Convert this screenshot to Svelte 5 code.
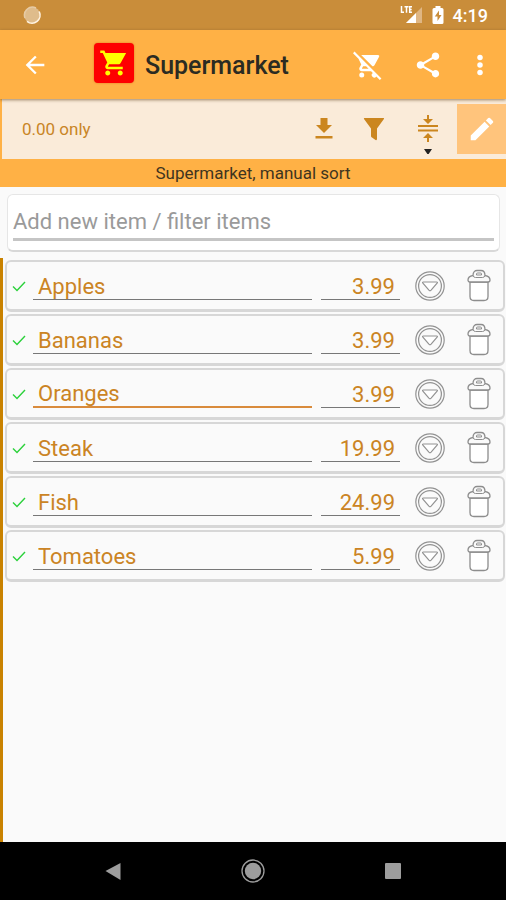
<script>
  let items = $state([
    { name: 'Apples', price: '3.99' },
    { name: 'Bananas', price: '3.99' },
    { name: 'Oranges', price: '3.99', active: true },
    { name: 'Steak', price: '19.99' },
    { name: 'Fish', price: '24.99' },
    { name: 'Tomatoes', price: '5.99' }
  ]);
  let query = $state('');
</script>

<div class="screen">
  <div class="status">
    <svg class="spinner" width="20" height="20" viewBox="0 0 20 20">
      <circle cx="10" cy="10" r="8" fill="#dfbc8b" />
      <path d="M17.2 6.5A8 8 0 0 1 5 16.3" fill="none" stroke="#fff3e2" stroke-width="1.600" />
      <path d="M3 13A8 8 0 0 1 14 3" fill="none" stroke="#e6cba5" stroke-width="1.500" />
    </svg>
    <svg width="24" height="20" viewBox="0 0 24 20">
      <path d="M22 2v16H6z" fill="#dfb683" />
      <path d="M16 8v10H6z" fill="#fff" />
      <path d="M0 0h13v9H0z" fill="#c98d3a" />
      <path d="M1.500 1v6.200h2.500M4.500 1.700h4M6.500 1.700v6M12 1.700H9.700v5.500H12M9.700 4.400h2" fill="none" stroke="#fff" stroke-width="1.500" />
    </svg>
    <svg class="battery" width="12" height="20" viewBox="0 0 12 20">
      <path d="M3.500 1h5v2H10q1.500 0 1.500 1.500v13q0 1.500-1.500 1.500H2Q.5 19 .5 17.500v-13Q.5 3 2 3h1.500z" fill="#fff" />
      <path d="M7 5.500 2.800 11.500h2.700V16l4-6H7z" fill="#c98d3a" />
    </svg>
    <time>4:19</time>
  </div>

  <header class="appbar">
    <button class="back" aria-label="Back">
      <svg width="28" height="28" viewBox="0 0 24 24" fill="#fff"><path d="M20 11H7.830l5.590-5.590L12 4l-8 8 8 8 1.410-1.410L7.830 13H20z" /></svg>
    </button>
    <span class="logo">
      <svg width="30" height="30" viewBox="0 0 24 24" fill="#ff0"><path d="M7 18c-1.100 0-2 .9-2 2s.9 2 2 2 2-.9 2-2-.9-2-2-2zM1 2v2h2l3.600 7.590-1.350 2.450c-.16.280-.25.610-.25.960 0 1.100.9 2 2 2h12v-2H7.420c-.14 0-.25-.11-.25-.25l.03-.12.900-1.630h7.450c.75 0 1.410-.41 1.750-1.030L21.700 4H5.210l-.94-2H1zm16 16c-1.100 0-2 .9-2 2s.9 2 2 2 2-.9 2-2-.9-2-2-2z" /></svg>
    </span>
    <h1>Supermarket</h1>
    <button class="cart" aria-label="Remove purchased">
      <svg width="30" height="30" viewBox="0 0 24 24" fill="#fff"><path d="M22.730 22.730 2.770 2.770 2 2l-.73-.73L0 2.540l4.390 4.390 2.210 4.660-1.350 2.450c-.16.280-.25.610-.25.960 0 1.100.9 2 2 2h7.460l1.380 1.380A2 2 0 1 0 18.640 21.170L21.460 24l1.270-1.270zM7.420 15c-.14 0-.25-.11-.25-.25l.03-.12.900-1.630h2.360l2 2H7.420zm8.130-2c.75 0 1.410-.41 1.750-1.030l3.580-6.490A1 1 0 0 0 20 4H6.540l9.010 9zM7 18a2 2 0 1 0 0 4 2 2 0 0 0 0-4z" /></svg>
    </button>
    <button class="share" aria-label="Share">
      <svg width="30" height="30" viewBox="0 0 24 24" fill="#fff"><path d="M18 16.080c-.76 0-1.440.3-1.960.77L8.910 12.700c.05-.23.090-.46.090-.7s-.04-.47-.09-.7l7.050-4.110c.54.5 1.250.81 2.040.81 1.660 0 3-1.340 3-3s-1.340-3-3-3-3 1.340-3 3c0 .24.040.47.090.7L8.040 9.810C7.500 9.310 6.790 9 6 9c-1.660 0-3 1.340-3 3s1.340 3 3 3c.79 0 1.500-.31 2.040-.81l7.120 4.160c-.05.210-.08.430-.08.650 0 1.610 1.310 2.920 2.920 2.920s2.920-1.310 2.920-2.920-1.310-2.920-2.920-2.920z" /></svg>
    </button>
    <button class="more" aria-label="More options">
      <svg width="30" height="30" viewBox="0 0 24 24" fill="#fff"><circle cx="12" cy="6" r="2.200" /><circle cx="12" cy="12" r="2.200" /><circle cx="12" cy="18" r="2.200" /></svg>
    </button>
  </header>

  <div class="toolbar">
    <span class="total">0.00 only</span>
    <button aria-label="Collect">
      <svg width="30" height="30" viewBox="0 0 30 30" fill="#cb861f"><path d="M11.500 4h7v7H23l-8 8-8-8h4.500zM6.500 22h17v2.500h-17z" /></svg>
    </button>
    <button aria-label="Filter">
      <svg width="30" height="30" viewBox="0 0 30 30" fill="#cb861f"><path d="M5.500 4h19q1 0 .4 1L18 14.500V25q0 1.500-1.500 1L13 23.500q-1-.5-1-1.500v-7.500L5 5q-.5-1 .5-1z" /></svg>
    </button>
    <button class="sort" aria-label="Sort order">
      <svg width="30" height="50" viewBox="0 0 30 50"><path d="M5 22h20M5 26.500h20" stroke="#cb861f" stroke-width="2.200" /><path d="M14 11h2v4h4l-5 5-5-5h4zM14 38h2v-4h4l-5-5-5 5h4z" fill="#cb861f" /><path d="M11 45h8l-4 6z" fill="#222" /></svg>
    </button>
    <button class="edit" aria-label="Edit mode">
      <svg width="30" height="30" viewBox="0 0 24 24" fill="#fff"><path d="M3 17.250V21h3.750L17.810 9.940l-3.750-3.750L3 17.250zM20.710 7.040a1 1 0 0 0 0-1.410l-2.340-2.340a1 1 0 0 0-1.410 0l-1.830 1.830 3.750 3.750 1.830-1.830z" /></svg>
    </button>
  </div>
  <div class="band">Supermarket, manual sort</div>

  <div class="search">
    <input type="text" aria-label="Add new item or filter items" placeholder="Add new item / filter items" bind:value={query} />
  </div>

  <main class="list">
    {#each items as item}
      <div class="row">
        <svg class="tick" width="14" height="14" viewBox="0 0 14 14"><path d="M1 7.500 5 11.500 13 3" fill="none" stroke="#2bd13b" stroke-width="1.400" /></svg>
        <input class="name" class:active={item.active} type="text" aria-label="Item name" bind:value={item.name} />
        <input class="price" type="text" inputmode="decimal" aria-label="Price of {item.name}" bind:value={item.price} />
        <button aria-label="Options for {item.name}">
          <svg width="32" height="32" viewBox="0 0 32 32" fill="none" stroke="#929292" stroke-width="1.200"><circle cx="16" cy="16" r="14.200" /><circle cx="16" cy="16" r="11.400" /><path d="M9.500 12h13q1.500 0 .6 1.200l-6 7q-1.100 1.200-2.200 0l-6-7Q8 12 9.500 12z" fill="#fff" /></svg>
        </button>
        <button class="delete" aria-label="Delete {item.name}">
          <svg width="26" height="34" viewBox="0 0 26 34" stroke="#8d8d8d" stroke-width="1.300" stroke-linejoin="round"><path d="M4 13v14.500q0 4 4 4h10q4 0 4-4V13z" fill="#fff" /><path d="M7 6.500C7 3 9 1.500 11 1.500h4c2 0 4 1.500 4 5 3.500.6 5 2.500 5 4.500 0 1.300-.7 2-2 2H4c-1.300 0-2-.7-2-2 0-2 1.500-3.900 5-4.500z" fill="#fafafa" /><path d="M10.500 6V5q0-1 1-1h3q1 0 1 1v1zM7 6.500q.5 2 2.500 2h7q2 0 2.500-2" fill="none" stroke-width="1" /></svg>
        </button>
      </div>
    {/each}
  </main>

  <nav class="navbar" aria-label="System navigation">
    <button aria-label="System back"><svg width="24" height="24" viewBox="0 0 24 24"><path d="M4.500 12 19.500 4v17z" fill="#9d9d9d" /></svg></button>
    <button aria-label="Home"><svg width="24" height="24" viewBox="0 0 24 24"><circle cx="12" cy="12" r="11" fill="none" stroke="#9d9d9d" stroke-width="1.300" /><circle cx="12" cy="12" r="8.200" fill="#9d9d9d" /></svg></button>
    <button aria-label="Recent apps"><svg width="24" height="24" viewBox="0 0 24 24"><rect x="4" y="4" width="16" height="16" rx="1" fill="#9d9d9d" /></svg></button>
  </nav>
</div>

<style>
  :global(body) {
    margin: 0;
    background: #fafafa;
  }
  .screen {
    display: flex;
    flex-direction: column;
    min-height: 100vh;
    background: #fafafa;
    font-family: Roboto, sans-serif;
  }
  svg {
    display: block;
    flex: none;
  }
  button {
    display: flex;
    align-items: center;
    justify-content: center;
    flex: none;
    padding: 0;
    border: 0;
    background: none;
  }
  input {
    box-sizing: border-box;
    min-width: 0;
    padding: 0;
    border: 0;
    border-radius: 0;
    outline: 0;
    background: none;
    font-family: inherit;
    font-size: 22px;
  }
  .status {
    display: flex;
    align-items: center;
    height: 30px;
    padding: 0 18px 0 22px;
    background: #c98d3a;
  }
  .spinner {
    margin-right: auto;
  }
  .battery {
    margin: 0 9px 0 8px;
  }
  time {
    color: #fff;
    font-size: 18px;
    font-weight: 500;
  }
  .appbar {
    position: relative;
    display: flex;
    align-items: center;
    height: 69px;
    padding-right: 4px;
    background: #ffb145;
    box-shadow: 0 1px 3px rgba(90, 60, 20, 0.6);
  }
  .back {
    width: 70px;
    height: 56px;
  }
  .logo {
    display: flex;
    align-items: center;
    justify-content: center;
    width: 40px;
    height: 40px;
    margin: 0 11px 4px 24px;
    border-radius: 4px;
    background: #fe0000;
    box-shadow: 0 0 2px rgba(200, 60, 0, 0.6);
  }
  h1 {
    flex: 1;
    margin: 0;
    padding-top: 2px;
    color: #2b2b22;
    font-size: 25px;
    font-weight: 500;
  }
  .cart,
  .share {
    width: 60px;
    height: 56px;
  }
  .more {
    width: 44px;
    height: 56px;
  }
  .toolbar {
    display: flex;
    align-items: center;
    height: 60px;
    border-left: 2px solid #ffb145;
    background: #faebd9;
  }
  .total {
    flex: 1;
    padding-left: 20px;
    color: #c98526;
    font-size: 17px;
  }
  .toolbar button {
    width: 50px;
    height: 50px;
  }
  .toolbar .sort {
    width: 58px;
  }
  .toolbar .edit {
    width: 49px;
    background: #ffc47c;
  }
  .band {
    height: 28px;
    background: #ffb145;
    color: #3f351f;
    font-size: 17px;
    line-height: 28px;
    text-align: center;
  }
  .search {
    display: flex;
    margin: 7px 6px 0 7px;
    padding: 6px 5px 9px;
    border: 1px solid #e6e6e6;
    border-bottom: 2px solid #d8d8d8;
    border-radius: 6px;
    background: #fff;
  }
  .search input {
    flex: 1;
    height: 40px;
    padding-top: 4px;
    border-bottom: 3px solid #c5c5c5;
    color: #555;
  }
  .search input::placeholder {
    color: #9a9a9a;
    opacity: 1;
  }
  .list {
    display: flex;
    flex: 1;
    flex-direction: column;
    gap: 2px;
    margin-top: 6px;
    padding: 2px 1px 8px 2px;
    border-left: 3px solid #c98200;
  }
  .row {
    display: flex;
    align-items: center;
    box-sizing: border-box;
    height: 52px;
    padding-left: 5px;
    border: 2px solid #d7d7d7;
    border-bottom-width: 3px;
    border-radius: 6px;
    background: #fafafa;
  }
  .row input {
    height: 28px;
    padding: 2px 5px 0;
    border-bottom: 1px solid #777;
    color: #cb8424;
  }
  .name {
    flex: 1;
    margin: 0 9px 0 7px;
  }
  .row .active {
    border-bottom: 2px solid #d98b3c;
  }
  .price {
    width: 79px;
    margin-right: 5px;
    text-align: right;
  }
  .row button {
    width: 49px;
    height: 46px;
  }
  .row .delete {
    width: 50px;
    margin-right: -1px;
  }
  .navbar {
    display: flex;
    align-items: center;
    justify-content: center;
    gap: 92px;
    height: 58px;
    background: #000;
  }
  .navbar button {
    width: 48px;
    height: 48px;
  }
</style>
